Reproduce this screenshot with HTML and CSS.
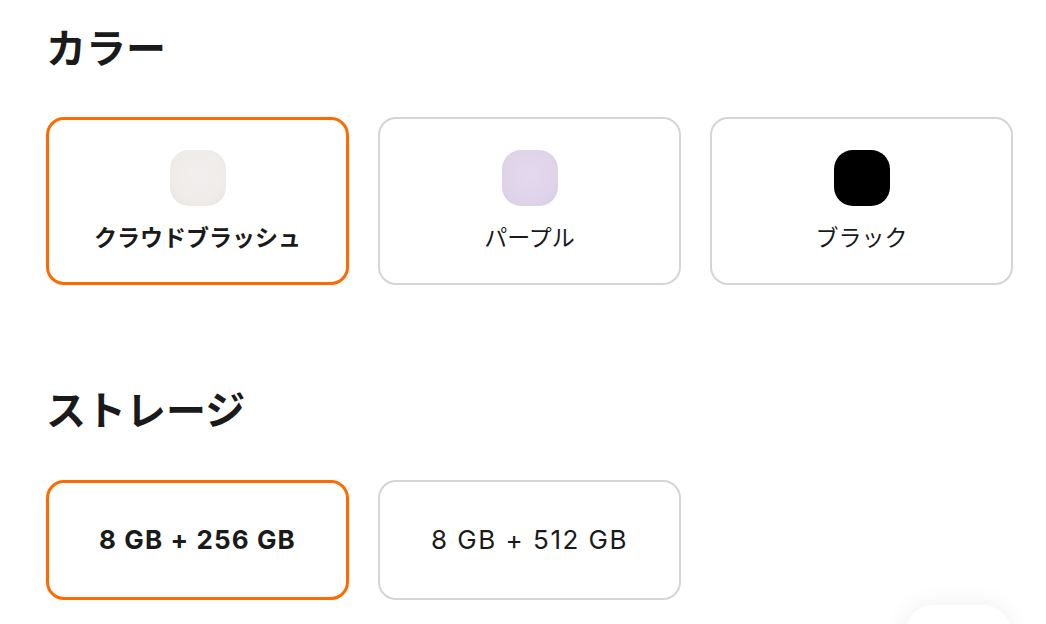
FILE: index.html
```html
<!DOCTYPE html>
<html lang="ja">
<head>
<meta charset="utf-8">
<title>カラー / ストレージ</title>
<link rel="stylesheet" href="styles.css">
</head>
<body>
<main class="page">
  <section class="group">
    <h2 class="group-title">カラー</h2>
    <div class="options">
      <button class="option color-option selected">
        <span class="swatch swatch-cloud"></span>
        <span class="option-label">クラウドブラッシュ</span>
      </button>
      <button class="option color-option">
        <span class="swatch swatch-purple"></span>
        <span class="option-label">パープル</span>
      </button>
      <button class="option color-option">
        <span class="swatch swatch-black"></span>
        <span class="option-label">ブラック</span>
      </button>
    </div>
  </section>
  <section class="group group-storage">
    <h2 class="group-title">ストレージ</h2>
    <div class="options">
      <button class="option storage-option selected">
        <span class="option-label">8 GB + 256 GB</span>
      </button>
      <button class="option storage-option">
        <span class="option-label">8 GB + 512 GB</span>
      </button>
    </div>
  </section>
</main>
<div class="floating-bubble"></div>
</body>
</html>
```
FILE: styles.css
```css
html, body {
  margin: 0;
  padding: 0;
  background: #ffffff;
  overflow: hidden;
}
body {
  font-family: "Inter", "Noto Sans CJK JP", sans-serif;
  color: #1a1a1a;
  width: 1046px;
  height: 624px;
}
.page {
  padding: 23px 33px 0 46px;
}
.group-title {
  margin: 0;
  font-family: "Noto Sans CJK JP", sans-serif;
  font-size: 40px;
  line-height: 46px;
  font-weight: 700;
  color: #1a1a1a;
}
.options {
  display: grid;
  grid-template-columns: repeat(3, 303px);
  column-gap: 29px;
  margin-top: 48px;
}
.group-storage {
  margin-top: 100px;
}
.group-storage .options {
  margin-top: 49px;
}
.option {
  box-sizing: border-box;
  background: #ffffff;
  border: 2px solid #d5d5d5;
  border-radius: 18px;
  margin: 0;
  padding: 0;
  font: inherit;
  color: #1a1a1a;
  cursor: pointer;
  display: flex;
  flex-direction: column;
  align-items: center;
  justify-content: center;
}
.option.selected {
  border: 3px solid #ff6a00;
}
.color-option {
  height: 168px;
  padding-top: 31px;
  justify-content: flex-start;
}
.option.selected.color-option {
  padding-top: 30px;
}
.swatch {
  display: block;
  width: 56px;
  height: 56px;
  border-radius: 19px;
}
.swatch-cloud {
  background: radial-gradient(circle at 50% 45%, #f2f0ef 0%, #efecea 60%, #e7e3e1 100%);
}
.swatch-purple {
  background: radial-gradient(circle at 50% 45%, #e3d8ed 0%, #e0d4ea 60%, #d8cae4 100%);
}
.swatch-black {
  background: #000000;
}
.color-option .option-label {
  margin-top: 15px;
  font-family: "Noto Sans CJK JP", sans-serif;
  font-size: 23px;
  line-height: 30px;
  font-weight: 400;
}
.color-option.selected .option-label {
  font-weight: 700;
}
.storage-option {
  height: 120px;
}
.storage-option .option-label {
  font-family: "Inter", "Noto Sans CJK JP", sans-serif;
  font-size: 26px;
  line-height: 30px;
  font-weight: 400;
  letter-spacing: 1.5px;
}
.storage-option.selected .option-label {
  font-weight: 700;
  letter-spacing: 1.1px;
}
.floating-bubble {
  position: fixed;
  left: 905px;
  top: 605px;
  width: 106px;
  height: 60px;
  border-radius: 28px;
  background: #ffffff;
  box-shadow: 0 0 24px rgba(0, 0, 0, 0.07);
}
```
